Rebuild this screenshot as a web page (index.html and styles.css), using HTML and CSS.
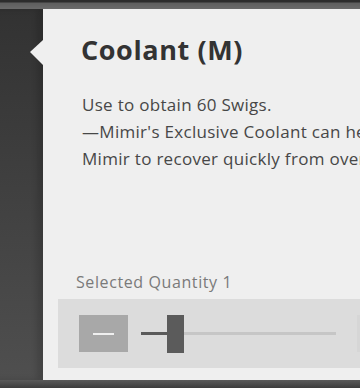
FILE: index.html
```html
<!DOCTYPE html>
<html lang="en">
<head>
  <meta charset="UTF-8" />
  <meta name="viewport" content="width=device-width, initial-scale=1.0"/>
  <title>Coolant (M)</title>
  <link rel="stylesheet" href="styles.css">
</head>
<body>

<div class="top-bar"></div>

<div class="middle">
  <div class="side"></div>

  <section class="panel">
    <h1 class="item-title">Coolant (M)</h1>
    <div class="desc">
      <p>Use to obtain 60 Swigs.</p>
      <p>—Mimir's Exclusive Coolant can help<br>Mimir to recover quickly from overheating.</p>
    </div>

    <div class="qty-label">Selected Quantity 1</div>
    <div class="qty-bar">
      <div class="qty-btn minus"><span></span></div>
      <div class="slider">
        <div class="fill"></div>
        <div class="thumb"></div>
        <div class="rest"></div>
      </div>
      <div class="qty-btn plus"></div>
    </div>
  </section>
</div>

<div class="bottom-bar"></div>

</body>
</html>
```

FILE: styles.css
```css
body {
  margin: 0;
  width: 360px;
  height: 388px;
  overflow: hidden;
  font-family: 'Open Sans', 'Noto Sans', sans-serif;
  background-color: #3a3a3a;
}

.top-bar {
  height: 9px;
  background: linear-gradient(to bottom, #2c2c2c 0px, #2c2c2c 2px, #5e5e5e 3px, #6a6a6a 9px);
}

.middle {
  display: flex;
  height: 371px;
}

.side {
  position: relative;
  width: 43px;
  flex-shrink: 0;
  background: linear-gradient(to bottom, #323232, #3f3f3f 45%, #4f4f4f);
  box-shadow: inset -6px 0 6px rgba(0, 0, 0, 0.15);
}

/* little pointer on the left edge of the panel */
.side::after {
  content: "";
  position: absolute;
  right: 0;
  top: 31px;
  border-top: 12px solid transparent;
  border-bottom: 13px solid transparent;
  border-right: 13px solid #efefef;
}

.panel {
  flex: 1;
  min-width: 0;
  overflow: hidden;
  background-color: #efefef;
  display: flex;
  flex-direction: column;
}

.item-title {
  margin: 24px 0 0 38px;
  font-size: 27px;
  font-weight: 700;
  letter-spacing: 0.6px;
  line-height: 34px;
  color: #333333;
  white-space: nowrap;
}

.desc {
  margin: 24px 0 0 39px;
  font-size: 17px;
  letter-spacing: 0.3px;
  line-height: 27px;
  color: #474747;
  white-space: nowrap;
}

.desc p {
  margin: 0;
}

.qty-label {
  margin: 101px 0 0 33px;
  font-size: 16px;
  letter-spacing: 0.6px;
  line-height: 19px;
  color: #7a7a7a;
}

.qty-bar {
  margin: 7px 0 0 15px;
  height: 69px;
  background-color: #dcdcdc;
  display: flex;
  align-items: center;
  padding-left: 21px;
}

.qty-btn {
  width: 49px;
  height: 37px;
  flex-shrink: 0;
  display: flex;
  align-items: center;
  justify-content: center;
}

.minus {
  background-color: #a8a8a8;
}

.minus span {
  width: 21px;
  height: 2px;
  background-color: #efefef;
}

.slider {
  display: flex;
  align-items: center;
  margin-left: 13px;
  width: 195px;
  flex-shrink: 0;
}

.fill {
  width: 26px;
  height: 3px;
  background-color: #5a5a5a;
}

.thumb {
  width: 17px;
  height: 38px;
  background-color: #5b5b5b;
}

.rest {
  flex: 1;
  height: 3px;
  background-color: #c6c6c6;
}

.plus {
  margin-left: 21px;
  background-color: #d6d6d6;
}

.bottom-bar {
  height: 8px;
  background: linear-gradient(to bottom, #5a5a5a, #3c3c3c);
}
```
